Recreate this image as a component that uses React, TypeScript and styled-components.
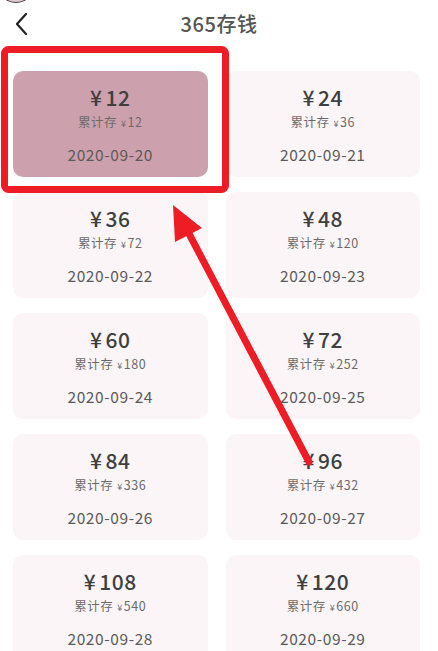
import React from "react";
import styled, { createGlobalStyle } from "styled-components";

const Global = createGlobalStyle`
  html, body { margin: 0; padding: 0; background: #ffffff; }
  body { font-family: "Noto Sans CJK SC", "Noto Sans", sans-serif; }
  * { box-sizing: border-box; }
`;

const Page = styled.div`
  position: relative;
  width: 438px;
  height: 651px;
  overflow: hidden;
  background: #ffffff;
`;

const Header = styled.header`
  display: flex;
  align-items: center;
  justify-content: center;
  height: 48px;
  position: relative;
`;

const BackButton = styled.button`
  position: absolute;
  left: 10px;
  top: 11px;
  width: 22px;
  height: 26px;
  padding: 0;
  border: none;
  background: transparent;
  display: flex;
  align-items: center;
  justify-content: center;
`;

const Title = styled.h1`
  margin: 0;
  font-size: 20px;
  font-weight: 500;
  color: #555555;
  line-height: 24px;
  letter-spacing: 0.6px;
`;

const Grid = styled.div`
  display: grid;
  grid-template-columns: 1fr 1fr;
  column-gap: 18px;
  row-gap: 15px;
  padding: 23px 18px 0 13px;
`;

const Card = styled.div<{ $active?: boolean }>`
  height: 106px;
  border-radius: 10px;
  background: ${(p) => (p.$active ? "#cda0ad" : "#fbf5f7")};
  display: flex;
  flex-direction: column;
  align-items: center;
  padding-top: 14px;
`;

const Amount = styled.div`
  font-size: 21px;
  line-height: 24px;
  font-weight: 500;
  color: #3f3f3f;
  letter-spacing: 0.5px;
`;

const Yen = styled.span`
  margin-right: 3px;
`;

const Total = styled.div`
  margin-top: 5px;
  font-size: 12.5px;
  line-height: 16px;
  color: #6b6b6b;
  letter-spacing: 0.5px;
`;

const SmallYen = styled.span`
  font-size: 9px;
  margin-left: 4px;
  margin-right: 1px;
`;

const DateText = styled.div`
  margin-top: 12px;
  font-size: 15.5px;
  line-height: 20px;
  color: #5a5a5a;
  letter-spacing: 0.6px;
`;

const Overlay = styled.svg`
  position: absolute;
  left: 0;
  top: 0;
  pointer-events: none;
`;

const TopArc = styled.div`
  position: absolute;
  left: -4px;
  top: -40px;
  width: 40px;
  height: 43px;
  border-radius: 50%;
  border: 1.5px solid #4a3838;
  background: #d9c9c9;
`;

const data = Array.from({ length: 10 }, (_, i) => {
  const n = i + 1;
  return {
    amount: 12 * n,
    total: (12 * n * (n + 1)) / 2,
    date: `2020-09-${String(20 + i).padStart(2, "0")}`,
  };
});

export default function App() {
  return (
    <>
      <Global />
      <Page>
        <TopArc />
        <Header>
          <BackButton aria-label="back">
            <svg width="14" height="24" viewBox="0 0 14 24">
              <path d="M12 2 L3 12 L12 22" fill="none" stroke="#222" strokeWidth="2.2" strokeLinecap="round" strokeLinejoin="round" />
            </svg>
          </BackButton>
          <Title>365存钱</Title>
        </Header>
        <Grid>
          {data.map((d, i) => (
            <Card key={d.date} $active={i === 0}>
              <Amount>
                <Yen>¥</Yen>
                {d.amount}
              </Amount>
              <Total>
                累计存<SmallYen>¥</SmallYen>
                {d.total}
              </Total>
              <DateText>{d.date}</DateText>
            </Card>
          ))}
        </Grid>
        <Overlay width="438" height="651" viewBox="0 0 438 651">
          <rect x="4.5" y="49.5" width="221" height="140" rx="4" fill="none" stroke="#ee1c25" strokeWidth="7" />
          <line x1="309" y1="462" x2="186" y2="228" stroke="#ee1c25" strokeWidth="7" strokeLinecap="round" />
          <polygon points="173,205 202,228 175,242" fill="#ee1c25" />
        </Overlay>
      </Page>
    </>
  );
}
